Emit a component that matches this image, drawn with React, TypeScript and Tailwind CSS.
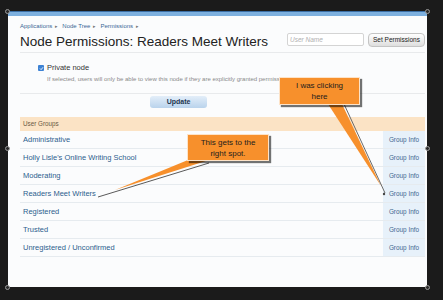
const groups = [
  "Administrative",
  "Holly Lisle's Online Writing School",
  "Moderating",
  "Readers Meet Writers",
  "Registered",
  "Trusted",
  "Unregistered / Unconfirmed",
];

const crumbs = ["Applications", "Node Tree", "Permissions"];

const Handle = ({ className }: { className: string }) => (
  <div
    className={`absolute h-[5px] w-[5px] rounded-full border border-[#9a9a9a] bg-[#2a2a2a] ${className}`}
  />
);

export default function App() {
  return (
    <div className="relative h-[300px] w-[443px] overflow-hidden bg-[#1b1b1b] pl-[8px] pt-[11px] font-['Liberation_Sans',Arial,sans-serif]">
      <div className="flex h-[276px] w-[419px] flex-col bg-[#fbfcfd]">
        <div className="h-[5px] border-t border-[#3b6fa6] bg-[#7db0df]" />

        <div className="flex flex-col pl-[12px] pr-[2px]">
          {/* breadcrumb */}
          <div className="mt-[6px] flex h-[8px] items-center gap-[4px] text-[6px] leading-[8px] text-[#3a6796]">
            {crumbs.map((c) => (
              <span key={c} className="flex items-center gap-[3px]">
                {c}
                <span className="text-[5px] text-[#777]">▸</span>
              </span>
            ))}
          </div>

          {/* title row */}
          <div className="mt-[3px] flex h-[20px] items-start justify-between border-b border-[#e8eaec]">
            <h1 className="text-[13.5px] leading-[18px] text-[#222]">
              Node Permissions: Readers Meet Writers
            </h1>
            <div className="flex items-start gap-[4px]">
              <div className="flex h-[13px] w-[77px] items-center rounded-[2px] border border-[#d4d4d4] bg-white pl-[2px] text-[6.5px] italic text-[#b0b0b0]">
                User Name
              </div>
              <div className="flex h-[14px] w-[57px] items-center justify-center rounded-[4px] border border-[#c4c4c4] bg-gradient-to-b from-[#ffffff] to-[#dedede] text-[6.5px] text-[#222]">
                Set Permissions
              </div>
            </div>
          </div>

          {/* private node */}
          <div className="flex flex-col border-b border-[#e8eaec] pb-[10px] pl-[18px] pt-[10px]">
            <div className="flex h-[10px] items-center gap-[3px]">
              <div className="flex h-[6px] w-[6px] items-center justify-center rounded-[1px] bg-[#3d82d4]">
                <svg width="5" height="5" viewBox="0 0 10 10">
                  <path d="M2 5 L4.2 7.3 L8 2.6" stroke="white" strokeWidth="1.8" fill="none" />
                </svg>
              </div>
              <span className="text-[7.5px] leading-[10px] text-[#333]">Private node</span>
            </div>
            <div className="mt-[2px] whitespace-nowrap pl-[9px] text-[6px] leading-[8px] text-[#8a8a8a]">
              If selected, users will only be able to view this node if they are explicitly granted permission.
            </div>
          </div>

          {/* update */}
          <div className="ml-[130px] mt-[2px] flex h-[12px] w-[57px] items-center justify-center rounded-[3px] bg-gradient-to-b from-[#e3eef9] to-[#b9d3ec] text-[7px] font-bold text-[#1e3550]">
            Update
          </div>

          {/* user groups */}
          <div className="mt-[9px] flex flex-col">
            <div className="flex h-[14px] items-center bg-[#fbe3c5] pl-[3px] text-[6.3px] text-[#6a5844]">
              User Groups
            </div>
            {groups.map((g) => (
              <div key={g} className="flex h-[18px] border-b border-[#e6ebef]">
                <div className="flex flex-1 items-center pl-[3px] text-[7.5px] text-[#2d5e8e]">{g}</div>
                <div className="flex w-[42px] items-center justify-center bg-[#e7f1fa] text-[6.4px] text-[#3f6890]">
                  Group Info
                </div>
              </div>
            ))}
          </div>
        </div>
      </div>

      {/* tails */}
      <svg className="pointer-events-none absolute left-0 top-0" width="443" height="300">
        <polygon points="328,104 342,104 381,186" fill="#f7902c" />
        <line x1="344" y1="104" x2="385" y2="193" stroke="#6a6a6a" strokeWidth="1" />
        <polygon points="188,160 209,160 115,190" fill="#f7902c" />
        <line x1="209" y1="163" x2="98" y2="197" stroke="#5a5a5a" strokeWidth="1" />
        <circle cx="384" cy="194" r="1.2" fill="#444" />
      </svg>

      {/* callouts */}
      <div className="absolute left-[279px] top-[77px] flex h-[28px] w-[81px] flex-col items-center justify-center border border-[#fde3c8] bg-[#f7902c] text-center text-[8px] leading-[11px] text-[#1d1d1d] shadow-[2px_2px_1px_rgba(0,0,0,0.55)]">
        <span>I was clicking</span>
        <span>here</span>
      </div>
      <div className="absolute left-[187px] top-[134px] flex h-[27px] w-[82px] flex-col items-center justify-center border border-[#fde3c8] bg-[#f7902c] text-center text-[8px] leading-[11px] text-[#1d1d1d] shadow-[2px_2px_1px_rgba(0,0,0,0.55)]">
        <span>This gets to the</span>
        <span>right spot.</span>
      </div>

      <Handle className="left-[5px] top-[9px]" />
      <Handle className="left-[425px] top-[9px]" />
      <Handle className="left-[5px] top-[285px]" />
      <Handle className="left-[425px] top-[285px]" />
      <Handle className="left-[5px] top-[146px]" />
      <Handle className="left-[425px] top-[146px]" />
    </div>
  );
}
